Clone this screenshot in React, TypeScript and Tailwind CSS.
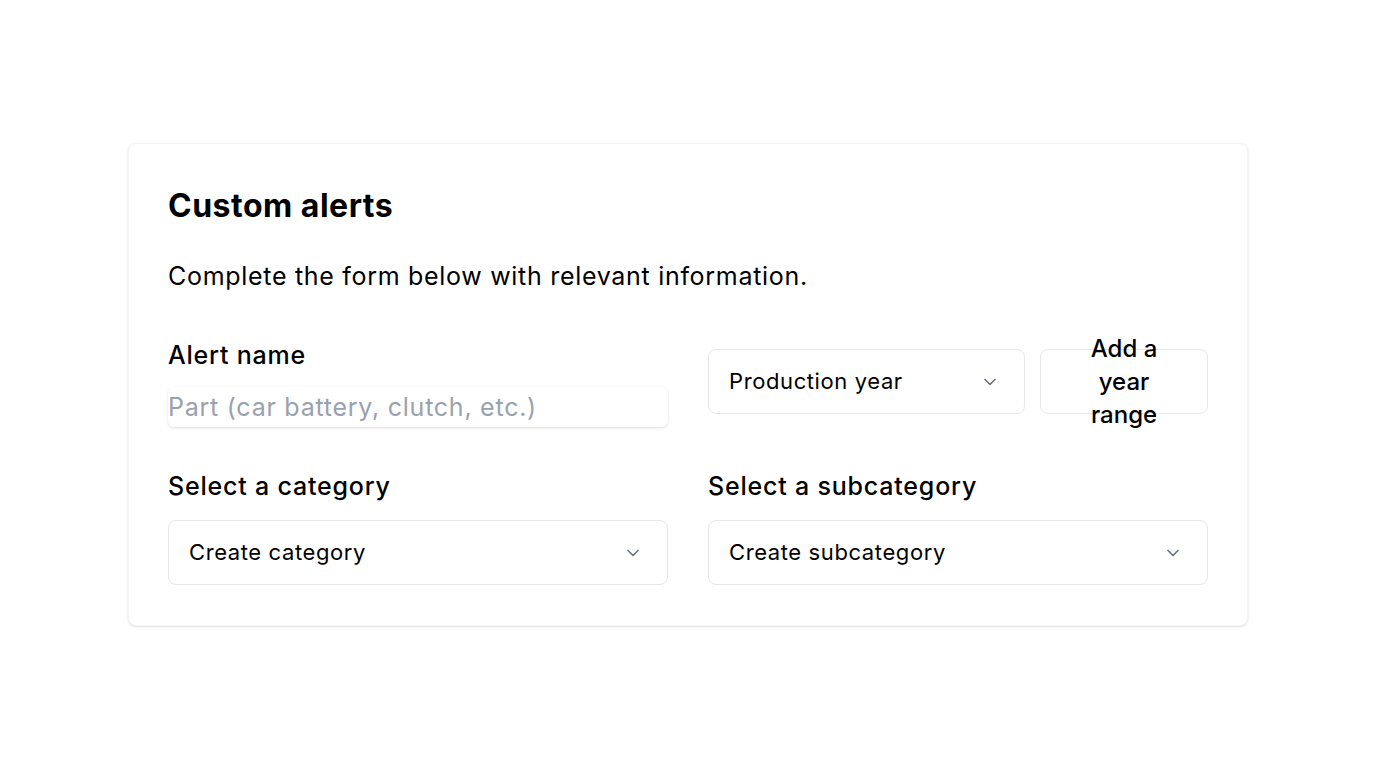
import { ChevronDown } from "lucide-react";

function Select({ label }: { label: string }) {
  return (
    <button
      type="button"
      className="flex h-[65px] w-full items-center justify-between rounded-lg border border-gray-200 bg-white pl-5 pr-6 text-left text-[22px] tracking-[0.6px] text-black"
    >
      <span>{label}</span>
      <ChevronDown className="h-5 w-5 text-gray-500" strokeWidth={2} />
    </button>
  );
}

export default function App() {
  return (
    <div className="min-h-screen bg-white pt-[143px] font-['Inter',sans-serif] text-black">
      <div className="mx-auto w-[1120px] rounded-lg border border-gray-100 bg-white px-[39px] pb-10 pt-[42px] shadow-sm">
        <h2 className="text-[32px] font-bold leading-10 tracking-[0.5px]">Custom alerts</h2>
        <p className="mt-[34px] text-[25px] leading-8 tracking-[0.7px]">
          Complete the form below with relevant information.
        </p>

        <div className="mt-[47px] grid grid-cols-2 items-start gap-x-10">
          <div>
            <label className="block text-[25px] font-medium leading-8 tracking-[0.8px]">
              Alert name
            </label>
            <input
              placeholder="Part (car battery, clutch, etc.)"
              className="mt-4 h-10 w-full rounded-md bg-white text-[25px] tracking-[0.75px] shadow-sm outline-none placeholder:text-gray-400"
            />
          </div>
          <div className="mt-[10px] flex items-center gap-[15px]">
            <div className="flex-1">
              <Select label="Production year" />
            </div>
            <button
              type="button"
              className="flex h-[65px] w-[168px] shrink-0 items-center justify-center rounded-lg border border-gray-200 bg-white px-6 text-center text-2xl font-medium leading-[33px]"
            >
              Add a year range
            </button>
          </div>
        </div>

        <div className="mt-[43px] grid grid-cols-2 gap-x-10">
          <div>
            <label className="block text-[25px] font-medium leading-8 tracking-[0.8px]">
              Select a category
            </label>
            <div className="mt-[18px]">
              <Select label="Create category" />
            </div>
          </div>
          <div>
            <label className="block text-[25px] font-medium leading-8 tracking-[0.8px]">
              Select a subcategory
            </label>
            <div className="mt-[18px]">
              <Select label="Create subcategory" />
            </div>
          </div>
        </div>
      </div>
    </div>
  );
}
